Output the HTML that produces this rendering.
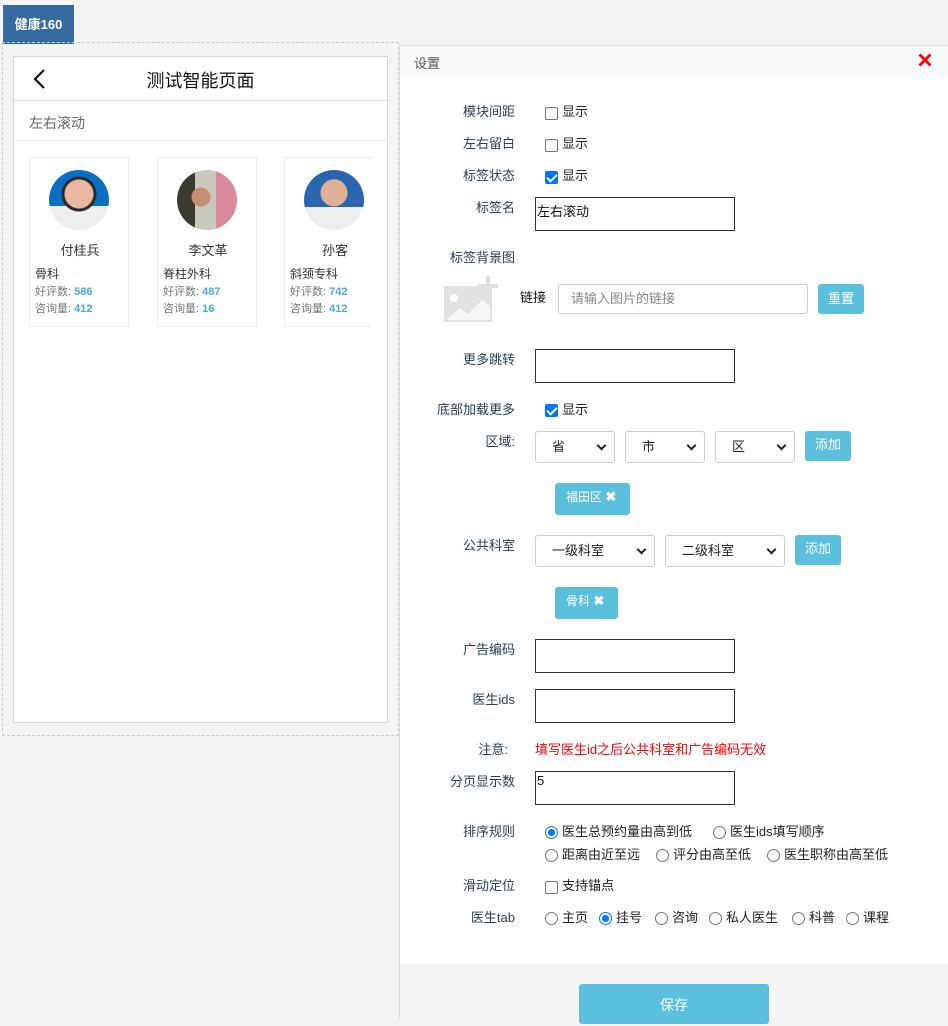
<!DOCTYPE html>
<html><head><meta charset="utf-8"><style>
*{box-sizing:border-box;margin:0;padding:0}
body{width:948px;height:1018px;background:#f4f4f4;position:relative;overflow:hidden;font-family:"Liberation Sans","Noto Sans CJK SC",sans-serif;font-size:13px;color:#333}
.a{position:absolute}
.lbl{position:absolute;right:433px;color:#2c3e50;font-size:13px;line-height:16px;white-space:nowrap}
.cb{position:absolute;width:13px;height:13px;border:1px solid #767676;border-radius:2px;background:#fff}
.cb.on{background:#0075ff;border-color:#0075ff}
.cb.on:after{content:"";position:absolute;left:3px;top:0px;width:4px;height:8px;border:solid #fff;border-width:0 2px 2px 0;transform:rotate(45deg)}
.rd{position:absolute;width:13px;height:13px;border:1px solid #767676;border-radius:50%;background:#fff}
.rd.on{border-color:#0075ff}
.rd.on:after{content:"";position:absolute;left:2px;top:2px;width:7px;height:7px;border-radius:50%;background:#0075ff}
.t{position:absolute;font-size:13px;line-height:16px;color:#222;white-space:nowrap}
.inp{position:absolute;border:1px solid #333;background:#fff;width:200px;height:34px}
.sel{position:absolute;border:1px solid #ccc;border-radius:3px;background:#fff;height:32px;font-size:13px;color:#222;line-height:30px}
.sel i{position:absolute;right:9px;top:10px;width:7px;height:7px;border:solid #222;border-width:0 2px 2px 0;transform:rotate(45deg)}
.btn{position:absolute;background:#5bc0de;color:#fff;border-radius:3px;font-size:13px;text-align:center}
.tag{position:absolute;background:#5bc0de;color:#fff;border-radius:3px;height:32px;line-height:28px;font-size:12px;padding-left:11px}
.card{position:absolute;top:156px;width:100px;height:170px;border:1px solid #eee;background:#fff}
.av{position:absolute;left:19px;top:12px;width:60px;height:60px;border-radius:50%}
.nm{position:absolute;top:82px;left:0;width:100px;text-align:center;font-size:13px;color:#333}
.dp{position:absolute;left:5px;top:107px;font-size:12px;color:#333}
.st{position:absolute;left:5px;font-size:11px;color:#777}
.st b{color:#4aa8e8;font-weight:bold}
</style></head><body>
<div class="a" style="left:3px;top:5px;width:71px;height:39px;background:#366ba0;color:#fff;font-size:13px;font-weight:bold;line-height:39px;text-align:center">健康160</div>
<div class="a" style="left:2px;top:42px;width:397px;height:694px;border:1px dashed #ccc"></div>
<div class="a" style="left:13px;top:56px;width:375px;height:667px;border:1px solid #d8d8d8;background:#fff;overflow:hidden">
 <svg class="a" style="left:17px;top:11px" width="18" height="22" viewBox="0 0 18 22"><path d="M13 2 L4 11 L13 20" fill="none" stroke="#111" stroke-width="2.2"/></svg>
 <div class="a" style="left:0;top:10px;width:373px;text-align:center;font-size:18px;color:#111">测试智能页面</div>
 <div class="a" style="left:0;top:43px;width:373px;height:1px;background:#ddd"></div>
 <div class="a" style="left:15px;top:56px;font-size:14px;color:#666">左右滚动</div>
 <div class="a" style="left:0;top:83px;width:373px;height:1px;background:#eee"></div>
 <div style="position:absolute;left:0;top:-56px;width:358px;height:400px;overflow:hidden">
 <div class="card" style="left:15px"><div class="av" style="background:radial-gradient(circle at 50% 40%,#e8b8a0 0 14px,#2a2a2a 15px 17px,transparent 18px),linear-gradient(#0a6fc2 60%,#eee 60%)"></div><div class="nm">付桂兵</div><div class="dp">骨科</div><div class="st" style="top:125px">好评数: <b>586</b></div><div class="st" style="top:142px">咨询量: <b>412</b></div></div>
 <div class="card" style="left:143px"><div class="av" style="background:radial-gradient(circle at 40% 45%,#c59070 0 9px,transparent 10px),linear-gradient(90deg,#3a3a30 30%,#c8c8bc 30% 65%,#d98a9a 65%)"></div><div class="nm">李文革</div><div class="dp">脊柱外科</div><div class="st" style="top:125px">好评数: <b>487</b></div><div class="st" style="top:142px">咨询量: <b>16</b></div></div>
 <div class="card" style="left:270px"><div class="av" style="background:radial-gradient(circle at 50% 38%,#e0b098 0 13px,transparent 14px),linear-gradient(#2a66b0 62%,#eee 62%)"></div><div class="nm">孙客</div><div class="dp">斜颈专科</div><div class="st" style="top:125px">好评数: <b>742</b></div><div class="st" style="top:142px">咨询量: <b>412</b></div></div>
 </div>
</div>

<div class="a" style="left:399px;top:45px;width:549px;height:973px;border-left:1px solid #ddd"></div>
<div class="a" style="left:400px;top:45px;width:548px;height:919px;background:#fff;border-top:1px solid #e4e4e4"></div>
<div class="a" style="left:400px;top:46px;width:548px;height:30px;background:#f7f9fa"></div>
<div class="a" style="left:414px;top:53px;font-size:13px;color:#555">设置</div>
<svg class="a" style="left:918px;top:53px" width="14" height="14" viewBox="0 0 14 14"><path d="M1.5 1.5 L12.5 12.5 M12.5 1.5 L1.5 12.5" stroke="#f00" stroke-width="2.8"/></svg>

<div class="lbl" style="top:104px">模块间距</div><div class="cb" style="left:545px;top:107px"></div><div class="t" style="left:562px;top:104px">显示</div>
<div class="lbl" style="top:136px">左右留白</div><div class="cb" style="left:545px;top:139px"></div><div class="t" style="left:562px;top:136px">显示</div>
<div class="lbl" style="top:168px">标签状态</div><div class="cb on" style="left:545px;top:171px"></div><div class="t" style="left:562px;top:168px">显示</div>
<div class="lbl" style="top:200px">标签名</div><div class="inp" style="left:535px;top:197px"><span style="font-size:13px;color:#111;position:absolute;left:1px;top:3px">左右滚动</span></div>
<div class="lbl" style="top:250px">标签背景图</div>
<svg class="a" style="left:442px;top:276px" width="58" height="48" viewBox="0 0 58 48"><rect x="2" y="10" width="48" height="36" rx="2" fill="#e2e2e2"/><circle cx="12" cy="22" r="4" fill="#fff"/><path d="M4 44 L18 32 L26 38 L40 24 L48 30 L48 44Z" fill="#fff" opacity=".7"/><rect x="44" y="0" width="4" height="20" fill="#e2e2e2"/><rect x="36" y="8" width="20" height="4" fill="#e2e2e2"/></svg>
<div class="t" style="left:520px;top:290px;color:#111">链接</div>
<div class="a" style="left:558px;top:284px;width:250px;height:30px;border:1px solid #ccc;border-radius:3px;background:#fff;font-size:13px;color:#888;line-height:28px;padding-left:12px">请输入图片的链接</div>
<div class="btn" style="left:818px;top:284px;width:46px;height:30px;line-height:30px">重置</div>
<div class="lbl" style="top:352px">更多跳转</div><div class="inp" style="left:535px;top:349px"></div>
<div class="lbl" style="top:402px">底部加载更多</div><div class="cb on" style="left:545px;top:404px"></div><div class="t" style="left:562px;top:402px">显示</div>
<div class="lbl" style="top:434px">区域:</div>
<div class="sel" style="left:535px;top:431px;width:80px;padding-left:16px">省<i></i></div>
<div class="sel" style="left:625px;top:431px;width:80px;padding-left:16px">市<i></i></div>
<div class="sel" style="left:715px;top:431px;width:80px;padding-left:16px">区<i></i></div>
<div class="btn" style="left:805px;top:431px;width:46px;height:30px;line-height:28px">添加</div>
<div class="tag" style="left:555px;top:483px;width:75px">福田区 <b style="font-size:13px">✖</b></div>
<div class="lbl" style="top:538px">公共科室</div>
<div class="sel" style="left:535px;top:535px;width:120px;padding-left:16px">一级科室<i></i></div>
<div class="sel" style="left:665px;top:535px;width:120px;padding-left:16px">二级科室<i></i></div>
<div class="btn" style="left:795px;top:535px;width:46px;height:30px;line-height:28px">添加</div>
<div class="tag" style="left:555px;top:587px;width:63px">骨科 <b style="font-size:13px">✖</b></div>
<div class="lbl" style="top:642px">广告编码</div><div class="inp" style="left:535px;top:639px"></div>
<div class="lbl" style="top:692px">医生ids</div><div class="inp" style="left:535px;top:689px"></div>
<div class="lbl" style="top:742px;right:440px">注意:</div><div class="t" style="left:535px;top:742px;color:#f00">填写医生id之后公共科室和广告编码无效</div>
<div class="lbl" style="top:774px">分页显示数</div><div class="inp" style="left:535px;top:771px"><span style="position:absolute;left:1px;top:1px;color:#111">5</span></div>
<div class="lbl" style="top:824px">排序规则</div>
<div class="rd on" style="left:545px;top:826px"></div><div class="t" style="left:562px;top:824px">医生总预约量由高到低</div>
<div class="rd" style="left:713px;top:826px"></div><div class="t" style="left:730px;top:824px">医生ids填写顺序</div>
<div class="rd" style="left:545px;top:849px"></div><div class="t" style="left:562px;top:847px">距离由近至远</div>
<div class="rd" style="left:656px;top:849px"></div><div class="t" style="left:673px;top:847px">评分由高至低</div>
<div class="rd" style="left:767px;top:849px"></div><div class="t" style="left:784px;top:847px">医生职称由高至低</div>
<div class="lbl" style="top:878px">滑动定位</div><div class="cb" style="left:545px;top:881px"></div><div class="t" style="left:562px;top:878px">支持锚点</div>
<div class="lbl" style="top:910px">医生tab</div>
<div class="rd" style="left:545px;top:912px"></div><div class="t" style="left:562px;top:910px">主页</div>
<div class="rd on" style="left:599px;top:912px"></div><div class="t" style="left:616px;top:910px">挂号</div>
<div class="rd" style="left:655px;top:912px"></div><div class="t" style="left:672px;top:910px">咨询</div>
<div class="rd" style="left:709px;top:912px"></div><div class="t" style="left:726px;top:910px">私人医生</div>
<div class="rd" style="left:792px;top:912px"></div><div class="t" style="left:809px;top:910px">科普</div>
<div class="rd" style="left:846px;top:912px"></div><div class="t" style="left:863px;top:910px">课程</div>
<div class="btn" style="left:579px;top:984px;width:190px;height:40px;line-height:42px;font-size:14px">保存</div>
</body></html>
